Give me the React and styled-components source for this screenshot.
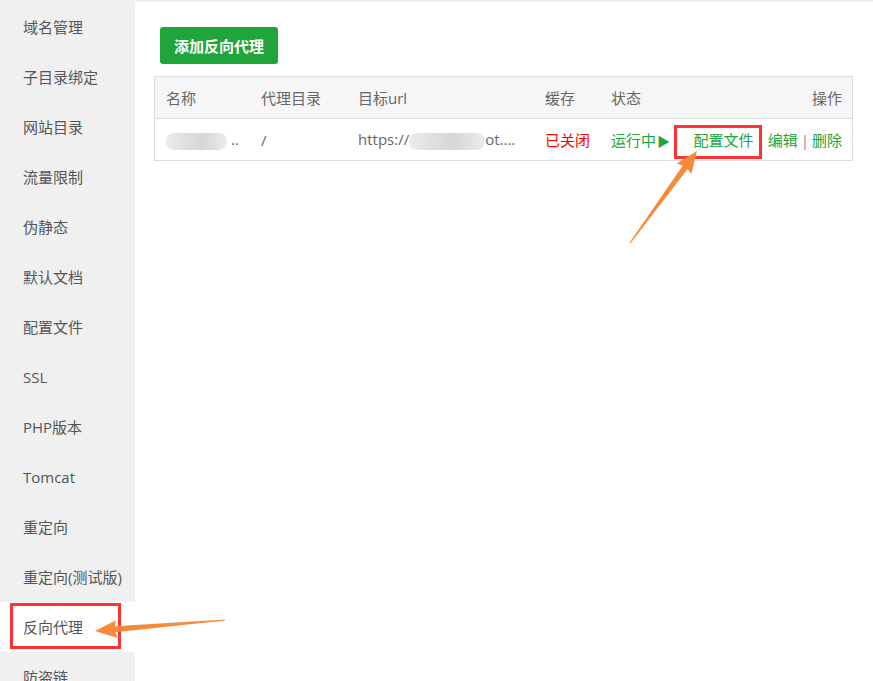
import React from 'react';
import styled, { createGlobalStyle } from 'styled-components';

const GlobalStyle = createGlobalStyle`
  html, body {
    margin: 0;
    padding: 0;
    background: #fff;
  }
  body {
    font-family: "Open Sans", "Noto Sans CJK SC", sans-serif;
    font-size: 15px;
    color: #555;
  }
`;

const Page = styled.div`
  position: relative;
  width: 873px;
  height: 681px;
  display: flex;
  overflow: hidden;
`;

const Sidebar = styled.div`
  width: 135px;
  flex-shrink: 0;
  background: #f0f0f0;
  padding-top: 2px;
`;

const MenuItem = styled.div`
  height: 50px;
  line-height: 50px;
  padding-left: 23px;
  font-size: 15px;
  color: #555;
  background: ${props => props.active ? '#fff' : 'transparent'};
  white-space: nowrap;
`;

const Main = styled.div`
  flex: 1;
  border-top: 2px solid #f0f0f0;
  padding: 25px 20px 0 19px;
`;

const AddButton = styled.button`
  margin-left: 6px;
  height: 37px;
  width: 118px;
  border: none;
  border-radius: 3px;
  background: #20a53a;
  color: #fff;
  font-family: "Noto Sans CJK SC", sans-serif;
  font-size: 15px;
  font-weight: 700;
  padding: 0;
`;

const Table = styled.div`
  margin-top: 12px;
  border: 1px solid #ddd;
`;

const Row = styled.div`
  display: grid;
  grid-template-columns: 95px 97px 187px 66px 76px 1fr;
  height: 41px;
  align-items: center;
  background: ${props => props.head ? '#f6f6f6' : '#fff'};
  border-top: ${props => props.head ? 'none' : '1px solid #ddd'};
`;

const Cell = styled.div`
  padding: 0 11px;
  text-align: ${props => props.right ? 'right' : 'left'};
  color: ${props => props.color || '#666'};
  white-space: nowrap;
  overflow: hidden;
`;

const ActionCell = styled(Cell)`
  padding-left: 0;
  padding-right: 10px;
`;

const Blur = styled.span`
  display: inline-block;
  vertical-align: middle;
  width: ${props => props.w}px;
  height: 17px;
  border-radius: 8px;
  background: linear-gradient(90deg, #ececec 0%, #dedede 35%, #d6d6d6 60%, #ececec 100%);
`;

const Link = styled.span`
  color: #20a53a;
`;

const Sep = styled.span`
  color: #888;
  margin: 0 3px;
`;

const Play = styled.span`
  font-size: 13px;
  margin-left: 1px;
`;

const Overlay = styled.svg`
  position: absolute;
  left: 0;
  top: 0;
  pointer-events: none;
`;

function arrow(tail, tip, headLen = 20, headHalf = 9, neck = 3, tailHalf = 0.6) {
  const dx = tip[0] - tail[0];
  const dy = tip[1] - tail[1];
  const len = Math.hypot(dx, dy);
  const ux = dx / len, uy = dy / len;
  const nx = -uy, ny = ux;
  const bx = tip[0] - ux * headLen, by = tip[1] - uy * headLen;
  const pts = [
    [tail[0] + nx * tailHalf, tail[1] + ny * tailHalf],
    [bx + nx * neck, by + ny * neck],
    [bx - ux * 2 + nx * headHalf, by - uy * 2 + ny * headHalf],
    tip,
    [bx - ux * 2 - nx * headHalf, by - uy * 2 - ny * headHalf],
    [bx - nx * neck, by - ny * neck],
    [tail[0] - nx * tailHalf, tail[1] - ny * tailHalf],
  ];
  return pts.map(p => p.join(',')).join(' ');
}

const menu = [
  '域名管理', '子目录绑定', '网站目录', '流量限制', '伪静态', '默认文档', '配置文件',
  'SSL', 'PHP版本', 'Tomcat', '重定向', '重定向(测试版)', '反向代理', '防盗链',
];

export default function App() {
  return (
    <>
      <GlobalStyle />
      <Page>
        <Sidebar>
          {menu.map(m => (
            <MenuItem key={m} active={m === '反向代理'}>{m}</MenuItem>
          ))}
        </Sidebar>
        <Main>
          <AddButton>添加反向代理</AddButton>
          <Table>
            <Row head>
              <Cell>名称</Cell>
              <Cell>代理目录</Cell>
              <Cell>目标url</Cell>
              <Cell>缓存</Cell>
              <Cell>状态</Cell>
              <ActionCell right>操作</ActionCell>
            </Row>
            <Row>
              <Cell><Blur w={61} /> ..</Cell>
              <Cell>/</Cell>
              <Cell>https://<Blur w={76} />ot....</Cell>
              <Cell color="#f00">已关闭</Cell>
              <Cell><Link>运行中<Play>▶</Play></Link></Cell>
              <ActionCell right>
                <Link>配置文件</Link><Sep>|</Sep><Link>编辑</Link><Sep>|</Sep><Link>删除</Link>
              </ActionCell>
            </Row>
          </Table>
        </Main>
        <Overlay width="873" height="681" viewBox="0 0 873 681">
          <rect x="675.5" y="126.5" width="85" height="31" fill="none" stroke="#f33" strokeWidth="3" />
          <rect x="11.5" y="604.5" width="108" height="43" fill="none" stroke="#f33" strokeWidth="3" />
          <polygon points={arrow([630, 243], [697, 151])} fill="#f68a3a" />
          <polygon points={arrow([225, 620], [95, 631])} fill="#f68a3a" />
        </Overlay>
      </Page>
    </>
  );
}
